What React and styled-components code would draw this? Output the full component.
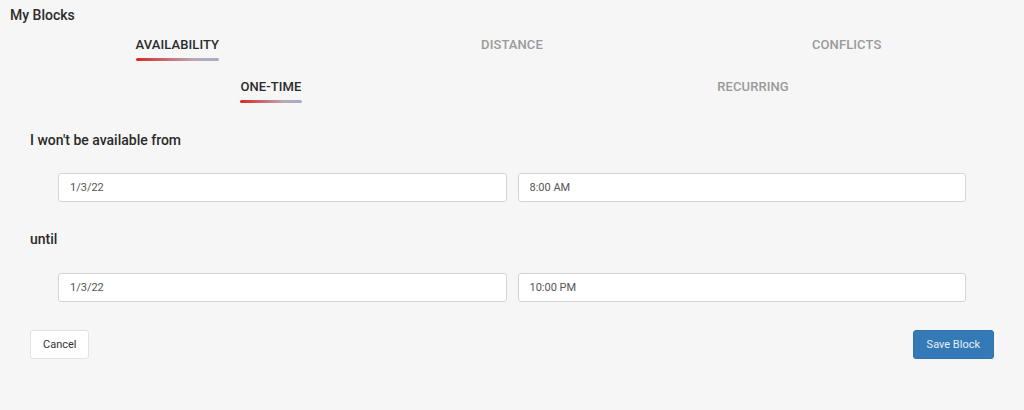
import React, { useState } from "react";
import styled, { createGlobalStyle } from "styled-components";

const GlobalStyle = createGlobalStyle`
  html, body {
    margin: 0;
    background: #f6f6f6;
    font-family: Roboto, "Noto Sans", "Liberation Sans", sans-serif;
  }
`;

const Page = styled.div`
  width: 1024px;
  height: 410px;
  background: #f6f6f6;
  padding: 6px 10px 0;
  box-sizing: border-box;
`;

const Title = styled.div`
  font-size: 14px;
  font-weight: 500;
  color: #2c2c2c;
  height: 18px;
  line-height: 18px;
`;

const Tabs = styled.div`
  display: grid;
  grid-template-columns: repeat(${(p) => p.count}, 1fr);
  margin: ${(p) => p.margin};
`;

const Tab = styled.button`
  justify-self: center;
  background: none;
  border: 0;
  padding: 0 0 9px;
  font-family: inherit;
  font-size: 13px;
  font-weight: 500;
  letter-spacing: 0.1px;
  color: ${(p) => (p.active ? "#2b2b2b" : "#9a9a9a")};
  position: relative;
  cursor: pointer;
  &::after {
    content: "";
    position: absolute;
    left: 0;
    right: 0;
    bottom: 0;
    height: 3px;
    border-radius: 2px;
    background: linear-gradient(90deg, #d9291e 0%, #b9a8b8 70%, #a9aec4 100%);
    opacity: ${(p) => (p.active ? 1 : 0)};
  }
`;

const Form = styled.div`
  padding: 0 20px;
`;

const Label = styled.div`
  font-size: 14px;
  font-weight: 500;
  color: #2a2a2a;
  margin: ${(p) => p.margin};
`;

const Row = styled.div`
  display: grid;
  grid-template-columns: 1fr 1fr;
  gap: 11px;
  padding: 0 28px;
`;

const Input = styled.input`
  height: 29px;
  box-sizing: border-box;
  border: 1px solid #d4d4d4;
  border-radius: 3px;
  background: #fff;
  padding: 0 11px;
  font-family: inherit;
  font-size: 11px;
  color: #555;
  outline: none;
`;

const Actions = styled.div`
  display: flex;
  justify-content: space-between;
  margin-top: 28px;
`;

const Button = styled.button`
  height: 29px;
  padding: 0 ${(p) => (p.primary ? 13 : 12)}px;
  border-radius: 3px;
  font-family: inherit;
  font-size: 11px;
  cursor: pointer;
  border: 1px solid ${(p) => (p.primary ? "#2f72ad" : "#e2e2e2")};
  background: ${(p) => (p.primary ? "#337ab7" : "#fff")};
  color: ${(p) => (p.primary ? "#e8eef6" : "#333")};
`;

export default function App() {
  const [tab, setTab] = useState("AVAILABILITY");
  const [sub, setSub] = useState("ONE-TIME");
  return (
    <>
      <GlobalStyle />
      <Page>
        <Title>My Blocks</Title>
        <Tabs count={3} margin="13px 0 0">
          {["AVAILABILITY", "DISTANCE", "CONFLICTS"].map((t) => (
            <Tab key={t} active={tab === t} onClick={() => setTab(t)}>
              {t}
            </Tab>
          ))}
        </Tabs>
        <Form>
          <Tabs count={2} margin="18px 0 0">
            {["ONE-TIME", "RECURRING"].map((t) => (
              <Tab key={t} active={sub === t} onClick={() => setSub(t)}>
                {t}
              </Tab>
            ))}
          </Tabs>
          <Label margin="29px 0 25px">I won't be available from</Label>
          <Row>
            <Input defaultValue="1/3/22" />
            <Input defaultValue="8:00 AM" />
          </Row>
          <Label margin="29px 0 26px">until</Label>
          <Row>
            <Input defaultValue="1/3/22" />
            <Input defaultValue="10:00 PM" />
          </Row>
          <Actions>
            <Button>Cancel</Button>
            <Button primary>Save Block</Button>
          </Actions>
        </Form>
      </Page>
    </>
  );
}
